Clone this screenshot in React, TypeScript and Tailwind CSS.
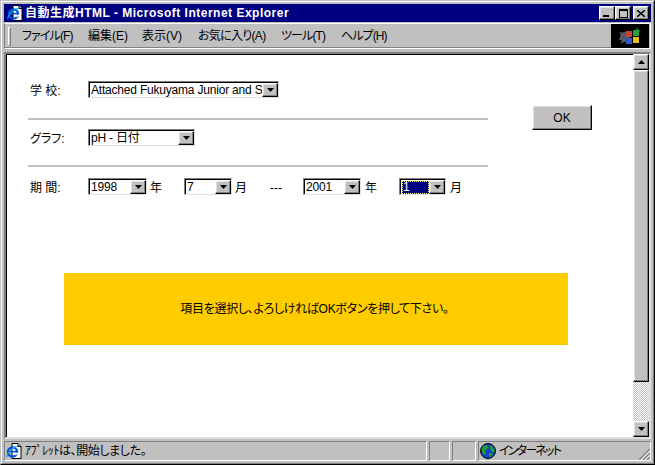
import React from "react";

const raised =
  "border border-t-white border-l-white border-r-black border-b-black shadow-[inset_-1px_-1px_#808080,inset_1px_1px_#dfdfdf]";
const pane = "border border-t-[#808080] border-l-[#808080] border-r-white border-b-white";
const ui = "font-['Liberation_Sans','Noto_Sans_CJK_JP',sans-serif] [font-feature-settings:'palt']";
const fieldLabel = "w-[60px] pl-[2px] mt-[3px]";

function IeIcon() {
  return (
    <svg width="16" height="16" viewBox="0 0 16 16" className="shrink-0">
      <path d="M6 .5H12L15 3.5V15.5H6Z" fill="#fff" stroke="#000" />
      <path d="M12 .5V3.5H15" fill="#c0c0c0" stroke="#000" />
      <circle cx="6.5" cy="9" r="4.6" fill="none" stroke="#0050d8" strokeWidth="2.4" />
      <path d="M3 8.6H10.5" stroke="#0050d8" strokeWidth="1.6" />
      <path d="M9 11.5L12 10" stroke="#fff" strokeWidth="1.6" />
      <path d="M1 14C0 11 6 4 12 3" fill="none" stroke="#00a0e0" strokeWidth="1.2" />
    </svg>
  );
}

function Globe() {
  return (
    <svg width="16" height="16" viewBox="0 0 16 16" className="shrink-0">
      <circle cx="8" cy="8" r="7.5" fill="#1840c8" stroke="#000" />
      <path d="M3 3L7 2L8 5L5 8L6 12L3 11L1.5 7Z" fill="#18a030" />
      <path d="M10 2L14 5L15 9L12 9L10 6Z" fill="#18a030" />
      <path d="M9 10L13 10L11 14.5L9 13Z" fill="#18a030" />
    </svg>
  );
}

function WindowsFlag() {
  return (
    <svg width="24" height="20" viewBox="0 0 24 20">
      <circle cx="7" cy="11" r="5" fill="#4a5a70" />
      <path d="M2 6L5 9M1 13L4 13M3 17L6 15" stroke="#7a5a50" strokeWidth="1.5" />
      <path d="M18 2L22 6" stroke="#1c5a24" strokeWidth="2" />
      <rect x="8" y="5" width="6" height="6" fill="#c84030" />
      <rect x="15" y="4" width="6" height="6" fill="#28a040" />
      <rect x="8" y="12" width="6" height="6" fill="#3058c0" />
      <rect x="15" y="11" width="6" height="6" fill="#e8c020" />
    </svg>
  );
}

function DownArrow() {
  return (
    <svg width="7" height="4" viewBox="0 0 7 4">
      <path d="M0 0H7L3.5 4Z" fill="#000" />
    </svg>
  );
}

function Select({ width, value, focused }: { width: string; value: string; focused?: boolean }) {
  return (
    <div className={`${width} h-[17px] shrink-0 flex items-center justify-between bg-white border border-t-[#808080] border-l-[#808080] border-r-[#dfdfdf] border-b-[#dfdfdf] shadow-[inset_1px_1px_#000]`}>
      {focused ? (
        <span className="ml-[2px] mt-[1px] h-[13px] flex-1 bg-[#000080] border border-dotted border-[#ffff80] text-white text-[12px] leading-[11px]">
          {value}
        </span>
      ) : (
        <span className="ml-[2px] pt-[1px] flex-1 overflow-hidden whitespace-nowrap text-[12px] leading-[14px] tracking-[-0.2px] text-black">{value}</span>
      )}
      <span className={`w-[16px] h-[14px] mt-[1px] shrink-0 bg-[#c0c0c0] flex items-center justify-center ${raised}`}>
        <DownArrow />
      </span>
    </div>
  );
}

function Divider() {
  return <div className="h-[2px] bg-[#c0c0c0]" />;
}

function CaptionButton({ children, className = "" }: { children: React.ReactNode; className?: string }) {
  return (
    <div className={`w-[16px] h-[14px] bg-[#c0c0c0] flex items-center justify-center ${raised} ${className}`}>
      {children}
    </div>
  );
}

function ScrollButton({ up }: { up?: boolean }) {
  return (
    <div className={`w-[16px] h-[16px] shrink-0 bg-[#c0c0c0] flex items-center justify-center ${raised}`}>
      <svg width="7" height="4" viewBox="0 0 7 4">
        <path d={up ? "M0 4H7L3.5 0Z" : "M0 0H7L3.5 4Z"} fill="#000" />
      </svg>
    </div>
  );
}

const menus = [
  { label: "ファイル(F)", w: "w-[66px] tracking-[-0.9px]" },
  { label: "編集(E)", w: "w-[54px]" },
  { label: "表示(V)", w: "w-[56px]" },
  { label: "お気に入り(A)", w: "w-[83px] tracking-[-0.7px]" },
  { label: "ツール(T)", w: "w-[60px] tracking-[-0.9px]" },
  { label: "ヘルプ(H)", w: "w-[60px] tracking-[-0.9px]" },
];

export default function App() {
  return (
    <div className={`w-[655px] h-[465px] overflow-hidden bg-[#c0c0c0] text-black border border-t-[#c0c0c0] border-l-[#c0c0c0] border-r-black border-b-black ${ui}`}>
      <div className="h-full flex flex-col p-[2px] border border-t-white border-l-white border-r-[#808080] border-b-[#808080]">
        {/* title bar */}
        <div className="h-[18px] shrink-0 bg-[#000080] flex items-center pl-[3px] pr-[2px]">
          <IeIcon />
          <span className="ml-[2px] text-white text-[12px] font-bold tracking-[0.5px] whitespace-nowrap">
            自動生成HTML - Microsoft Internet Explorer
          </span>
          <div className="ml-auto flex">
            <CaptionButton>
              <span className="w-[6px] h-[2px] bg-black mt-[6px] -ml-[2px]" />
            </CaptionButton>
            <CaptionButton>
              <span className="w-[9px] h-[9px] border border-black border-t-2" />
            </CaptionButton>
            <CaptionButton className="ml-[2px]">
              <svg width="8" height="7" viewBox="0 0 8 7">
                <path d="M0 0L8 7M8 0L0 7" stroke="#000" strokeWidth="1.4" />
              </svg>
            </CaptionButton>
          </div>
        </div>

        {/* menu band */}
        <div className="mt-[1px] h-[26px] shrink-0 flex border border-t-white border-l-[#808080] border-b-white border-r-white">
          <div className="flex-1 flex items-center pl-[3px] shadow-[inset_0_-1px_#808080]">
            <span className="w-[3px] h-[19px] border border-t-white border-l-white border-r-[#808080] border-b-[#808080]" />
            <div className="ml-[11px] flex text-[12px] whitespace-nowrap">
              {menus.map((m) => (
                <span key={m.label} className={m.w}>
                  {m.label}
                </span>
              ))}
            </div>
          </div>
          <div className="w-[38px] h-full bg-black flex items-center justify-center mr-[1px]">
            <WindowsFlag />
          </div>
        </div>

        {/* page area */}
        <div className="mt-[3px] flex-1 min-h-0 flex border-2 border-t-[#808080] border-l-[#808080] border-r-[#dfdfdf] border-b-[#dfdfdf] shadow-[inset_1px_1px_#000]">
          <div className="flex-1 bg-white mt-[1px] ml-[1px] text-[12px]">
            <div className="flex pl-[21px] pt-[26px]">
              <div className="w-[460px] flex flex-col">
                <div className="h-[17px] flex items-center">
                  <span className={fieldLabel}>学 校:</span>
                  <Select width="w-[191px]" value="Attached Fukuyama Junior and S" />
                </div>
                <div className="mt-[20px]">
                  <Divider />
                </div>
                <div className="mt-[9px] h-[17px] flex items-center">
                  <span className={fieldLabel}>グラフ:</span>
                  <Select width="w-[107px]" value="pH - 日付" />
                </div>
                <div className="mt-[19px]">
                  <Divider />
                </div>
                <div className="mt-[11px] h-[17px] flex items-center whitespace-nowrap">
                  <span className={fieldLabel}>期 間:</span>
                  <Select width="w-[59px]" value="1998" />
                  <span className="ml-[3px] w-[34px] mt-[3px]">年</span>
                  <Select width="w-[48px]" value="7" />
                  <span className="ml-[3px] w-[35px] mt-[3px]">月</span>
                  <span className="w-[33px] mt-[3px]">---</span>
                  <Select width="w-[58px]" value="2001" />
                  <span className="ml-[4px] w-[34px] mt-[3px]">年</span>
                  <Select width="w-[47px]" value="1" focused />
                  <span className="ml-[4px] mt-[3px]">月</span>
                </div>
              </div>
              <button className={`ml-[44px] mt-[24px] w-[60px] h-[25px] bg-[#c0c0c0] text-[12px] ${raised}`}>OK</button>
            </div>
            <div className="ml-[57px] mt-[78px] w-[504px] h-[72px] pr-[3px] bg-[#ffcc00] flex items-center justify-center text-[12px] tracking-[-0.3px]">
              項目を選択し、よろしければOKボタンを押して下さい。
            </div>
          </div>

          {/* scrollbar */}
          <div className="w-[16px] flex flex-col">
            <ScrollButton up />
            <div className={`h-[312px] shrink-0 bg-[#c0c0c0] ${raised}`} />
            <div className="flex-1 bg-[repeating-conic-gradient(#ffffff_0_25%,#c0c0c0_0_50%)] bg-[length:2px_2px]" />
            <ScrollButton />
          </div>
        </div>

        {/* status bar */}
        <div className="mt-[2px] h-[20px] shrink-0 flex gap-[2px] text-[12px]">
          <div className={`flex-1 flex items-center pl-[1px] whitespace-nowrap ${pane}`}>
            <IeIcon />
            <span className="ml-[3px] tracking-[-0.4px]">ｱﾌﾟﾚｯﾄは、開始しました。</span>
          </div>
          <div className={`w-[21px] ${pane}`} />
          <div className={`w-[24px] ${pane}`} />
          <div className={`w-[173px] flex items-center pl-[1px] relative ${pane}`}>
            <Globe />
            <span className="ml-[3px] tracking-[-1.8px]">インターネット</span>
            <svg width="12" height="12" viewBox="0 0 12 12" className="absolute right-0 bottom-0">
              <path d="M12 1L1 12M12 5L5 12M12 9L9 12" stroke="#808080" strokeWidth="1.2" />
              <path d="M12 3L3 12M12 7L7 12" stroke="#fff" />
            </svg>
          </div>
        </div>
      </div>
    </div>
  );
}
